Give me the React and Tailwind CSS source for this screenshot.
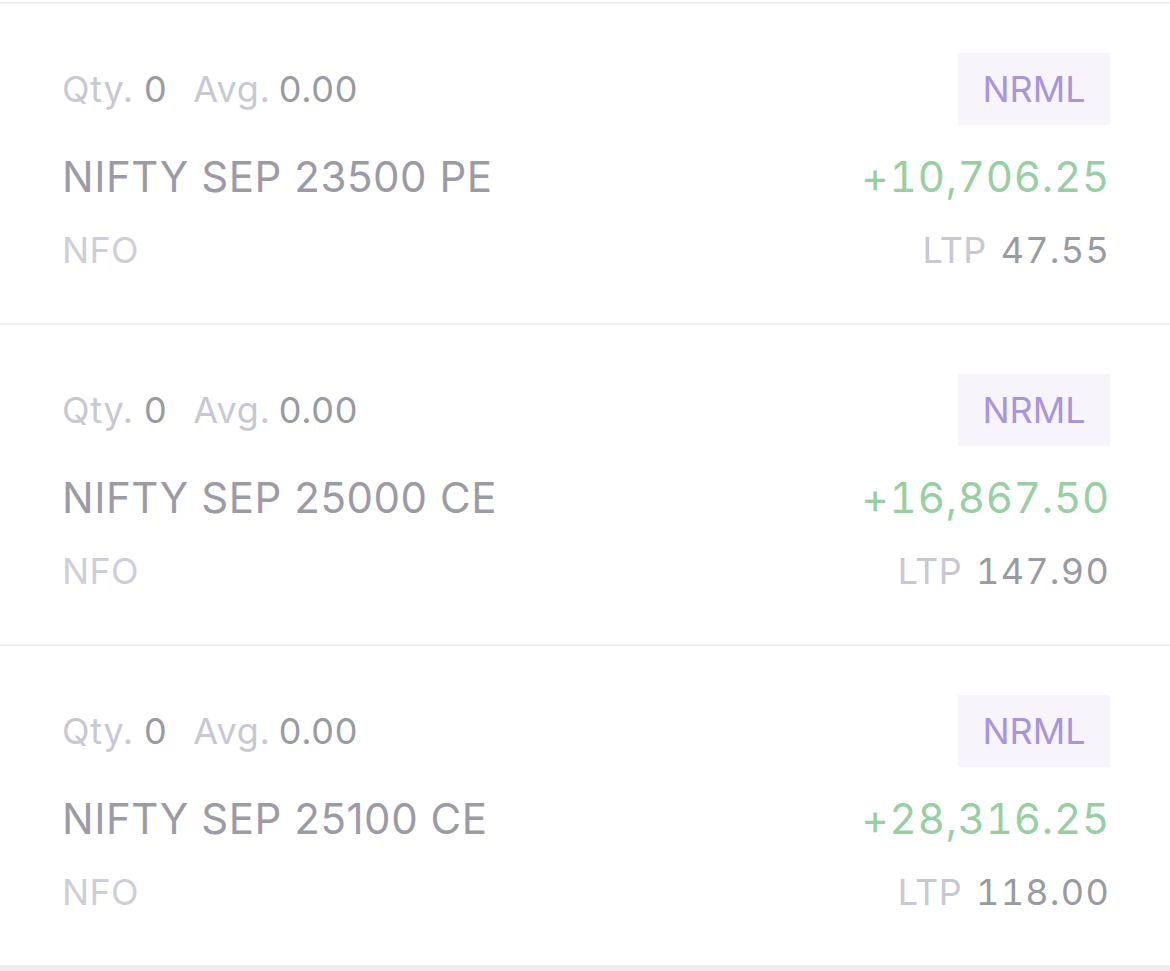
const positions = [
    { name: "NIFTY SEP 23500 PE", pnl: "+10,706.25", ltp: "47.55" },
    { name: "NIFTY SEP 25000 CE", pnl: "+16,867.50", ltp: "147.90" },
    { name: "NIFTY SEP 25100 CE", pnl: "+28,316.25", ltp: "118.00" },
];

function PositionRow({ item }) {
    return (
        <div className="flex flex-col h-[319px] pl-[62px] pr-[60px] pt-[49px] bg-white">
            <div className="flex justify-between items-center h-[72px]">
                <p className="text-[36px] leading-none tracking-[0.02em]">
                    <span className="text-[#c9c8d1]">Qty.</span>
                    <span className="text-[#9a9aa2] ml-[10px]">0</span>
                    <span className="text-[#c9c8d1] ml-[26px]">Avg.</span>
                    <span className="text-[#9a9aa2] ml-[8px]">0.00</span>
                </p>
                <span className="flex items-center justify-center w-[152px] h-[72px] bg-[#f7f4fb] text-[#a896d9] text-[36px] leading-none">
                    NRML
                </span>
            </div>
            <div className="flex justify-between items-center mt-[31px]">
                <p className="text-[42px] leading-none tracking-[0.013em] text-[#9c9ba5]">{item.name}</p>
                <p className="text-[42px] leading-none tracking-[0.019em] tabular-nums text-[#97cfa2]">{item.pnl}</p>
            </div>
            <div className="flex justify-between items-center mt-[34px]">
                <p className="text-[36px] leading-none tracking-[0.01em] text-[#cfced7]">NFO</p>
                <p className="text-[36px] leading-none">
                    <span className="text-[#c9c8d1] tracking-[0.01em]">LTP</span>
                    <span className="text-[#9a9aa2] ml-[14px] tabular-nums tracking-[0.035em]">{item.ltp}</span>
                </p>
            </div>
        </div>
    );
}

export default function App() {
    return (
        <div className="w-[1170px] h-[971px] bg-white overflow-hidden" style={{ fontFamily: "Inter, 'Noto Sans', sans-serif" }}>
            <div className="h-[2px] bg-white" />
            <div className="flex flex-col">
                {positions.map((item, i) => (
                    <div key={item.name} className="border-t-2 border-[#efeff1]">
                        {i < positions.length - 1 ? (
                            <PositionRow item={item} />
                        ) : (
                            <div className="bg-gradient-to-b from-white from-[93%] to-[#f4f4f6]">
                                <PositionRow item={item} />
                            </div>
                        )}
                    </div>
                ))}
            </div>
            <div className="h-[6px] bg-[#ededf0]" />
        </div>
    );
}
